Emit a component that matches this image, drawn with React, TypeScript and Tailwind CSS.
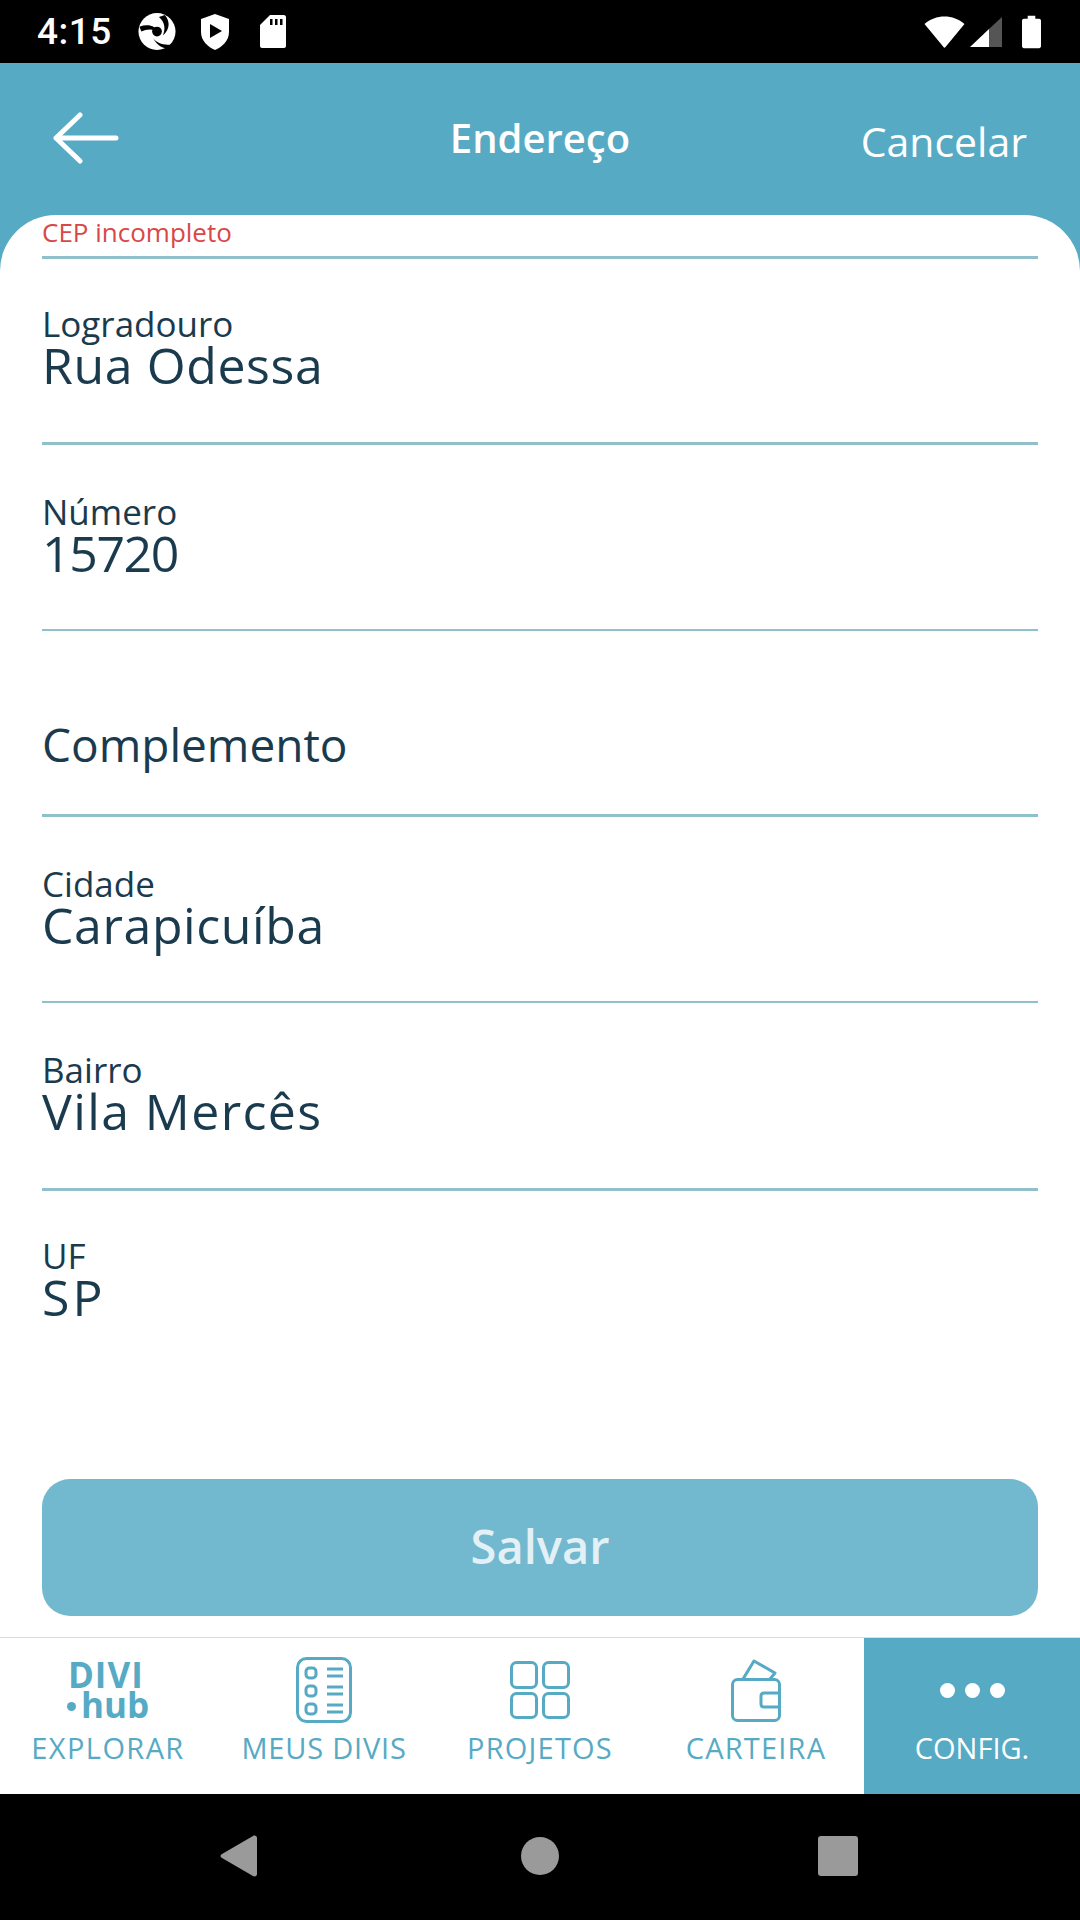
import type { ReactNode } from 'react';

function StatusBar() {
  return (
    <div className="h-[63px] shrink-0 bg-black flex items-center justify-between pl-[37px] pr-[39px] text-white">
      <div className="flex items-center">
        <span className="w-[73px] text-[37px] font-medium font-['Roboto',sans-serif] leading-none tracking-[0.5px]">4:15</span>
        <svg className="ml-[28px]" width="38" height="39" viewBox="0 0 38 40" fill="white">
          <circle cx="19" cy="20" r="19" />
          <path d="M1 15C10 12 18 14 21 22C17 17 9 17 3 20Z" fill="black" />
          <path d="M27 3C33 10 32 18 25 24C28 17 27 10 21 5Z" fill="black" />
          <path d="M15 27C19 32 27 35 35 33L37 36C28 40 20 36 15 27Z" fill="black" />
          <circle cx="19" cy="20" r="5" fill="black" />
        </svg>
        <svg className="ml-[24px]" width="30" height="36" viewBox="0 0 30 36" fill="white">
          <path d="M15 0L29 5V18C29 27 22 33 15 36C8 33 1 27 1 18V5Z" />
          <path d="M10 10L22 17L10 24Z" fill="black" />
        </svg>
        <svg className="ml-[30px]" width="26" height="33" viewBox="0 0 26 33" fill="white">
          <path d="M10 0H24C25 0 26 1 26 2V31C26 32 25 33 24 33H2C1 33 0 32 0 31V10Z" />
          <rect x="10" y="4" width="2.5" height="6" fill="black" />
          <rect x="15" y="4" width="2.5" height="6" fill="black" />
          <rect x="20" y="4" width="2.5" height="6" fill="black" />
        </svg>
      </div>
      <div className="flex items-center">
        <svg width="41" height="32" viewBox="0 0 40 32" fill="white">
          <path d="M0 8C11 -2 29 -2 40 8L21 31C20.500 32 19.500 32 19 31Z" />
        </svg>
        <svg className="ml-[5px]" width="32" height="31" viewBox="0 0 32 31">
          <path d="M0 31L19 13V31Z" fill="white" />
          <path d="M19 13L32 1V31H19Z" fill="#555" />
        </svg>
        <svg className="ml-[20px]" width="19" height="34" viewBox="0 0 20 34" fill="white">
          <path d="M6 0H14V3H18C19 3 20 4 20 5V32C20 33 19 34 18 34H2C1 34 0 33 0 32V5C0 4 1 3 2 3H6Z" />
        </svg>
      </div>
    </div>
  );
}

function Field({ label, value, className, valueClass }: { label: string; value: string; className: string; valueClass: string }) {
  return (
    <div className={`shrink-0 flex flex-col border-[#90c1ca] ${className}`}>
      <div className="pt-[48px] text-[35px] leading-[38px] text-[#1a3a4e]">{label}</div>
      <div className={`-mt-[4px] text-[50px] font-medium leading-[52px] text-[#1a3a4e] ${valueClass}`}>{value}</div>
    </div>
  );
}

function NavItem({ label, children, active, labelClass }: { label: string; children: ReactNode; active?: boolean; labelClass: string }) {
  return (
    <div className={`w-[216px] flex flex-col items-center ${active ? 'bg-[#56aac4] text-white' : 'text-[#56aac4]'}`}>
      <div className="h-[92px] pt-[12px] flex items-center justify-center">{children}</div>
      <div className={`text-[29px] leading-[36px] ${labelClass}`}>{label}</div>
    </div>
  );
}

function NavBar() {
  return (
    <div className="h-[157px] shrink-0 flex bg-white border-t border-[#d5dfe0]">
      <NavItem label="EXPLORAR" labelClass="tracking-[1.4px]">
        <div className="flex flex-col font-bold">
          <span className="text-[35px] leading-[29px] tracking-[1px] pl-[1px]">DIVI</span>
          <div className="flex items-center">
            <span className="w-[9px] h-[9px] rounded-full bg-[#56aac4] mr-[5px] mt-[4px]" />
            <span className="text-[35px] leading-[31px]">hub</span>
          </div>
        </div>
      </NavItem>
      <NavItem label="MEUS DIVIS" labelClass="tracking-[0.8px]">
        <svg width="56" height="66" viewBox="0 0 56 66" fill="none" stroke="currentColor" strokeWidth="3">
          <rect x="1.500" y="1.500" width="53" height="63" rx="9" />
          <rect x="10" y="11" width="10" height="10" rx="3.500" />
          <rect x="10" y="29" width="10" height="10" rx="3.500" />
          <rect x="10" y="47" width="10" height="10" rx="3.500" />
          <path d="M31 12H47M31 19H47M31 30H47M31 37H47M31 48H47M31 55H47" />
        </svg>
      </NavItem>
      <NavItem label="PROJETOS" labelClass="tracking-[1.2px]">
        <svg width="60" height="58" viewBox="0 0 60 58" fill="none" stroke="currentColor" strokeWidth="3">
          <rect x="1.500" y="1.500" width="25" height="25" rx="5" />
          <rect x="33.500" y="1.500" width="25" height="25" rx="5" />
          <rect x="1.500" y="32.500" width="25" height="24" rx="5" />
          <rect x="33.500" y="32.500" width="25" height="24" rx="5" />
        </svg>
      </NavItem>
      <NavItem label="CARTEIRA" labelClass="tracking-[1.2px]">
        <svg width="50" height="63" viewBox="0 0 50 63" fill="none" stroke="currentColor" strokeWidth="3" strokeLinejoin="round">
          <rect x="1.500" y="20.500" width="47" height="41" rx="5" />
          <path d="M12 20L23 2L44 14L39 20" />
          <path d="M48 34H33C31 34 30 35 30 37V45C30 47 31 48 33 48H48" />
        </svg>
      </NavItem>
      <NavItem label="CONFIG." labelClass="tracking-[0px]" active>
        <div className="flex gap-[10px]">
          <span className="w-[15px] h-[15px] rounded-full bg-white" />
          <span className="w-[15px] h-[15px] rounded-full bg-white" />
          <span className="w-[15px] h-[15px] rounded-full bg-white" />
        </div>
      </NavItem>
    </div>
  );
}

function SoftKeys() {
  return (
    <div className="h-[126px] shrink-0 bg-black flex items-center pl-[220px] pb-[2px]">
      <svg width="37" height="42" viewBox="0 0 37 42" fill="#9a9a9a">
        <path d="M2 19L33 1C35 0 37 1 37 3V39C37 41 35 42 33 41L2 23C0 22 0 20 2 19Z" />
      </svg>
      <div className="ml-[264px] w-[38px] h-[38px] rounded-full bg-[#9a9a9a]" />
      <div className="ml-[259px] w-[40px] h-[40px] rounded-[3px] bg-[#9a9a9a]" />
    </div>
  );
}

export default function App() {
  return (
    <div className="w-[1080px] h-[1920px] flex flex-col bg-white overflow-hidden font-['Open_Sans',sans-serif]">
      <StatusBar />
      <div className="bg-[#56aac4] h-[152px] shrink-0 flex items-center text-white pl-[53px] pr-[53px] pb-[2px]">
        <div className="flex-1">
          <svg width="66" height="52" viewBox="0 0 66 52" fill="none" stroke="white" strokeWidth="5" strokeLinecap="round" strokeLinejoin="round">
            <path d="M3 26H63M27 3L3 26L27 49" />
          </svg>
        </div>
        <span className="text-[40px] font-semibold">Endereço</span>
        <div className="flex-1 text-right text-[41px] mt-[8px]">Cancelar</div>
      </div>
      <div className="flex-1 bg-[#56aac4] flex flex-col">
        <div className="flex-1 bg-white rounded-t-[56px] flex flex-col px-[42px]">
          <div className="h-[44px] shrink-0 border-b-[3px] border-[#90c1ca] text-[26px] leading-[34px] text-[#d84848]">CEP incompleto</div>
          <Field label="Logradouro" value="Rua Odessa" className="h-[188px] -mt-[2px] border-b-[3px]" valueClass="tracking-[0.6px]" />
          <Field label="Número" value="15720" className="h-[186px] border-b-2" valueClass="tracking-[-1.4px]" />
          <div className="h-[186px] shrink-0 border-b-[3px] border-[#90c1ca] flex items-end pb-[44px] text-[46px] leading-[52px] text-[#1a3a4e]">Complemento</div>
          <Field label="Cidade" value="Carapicuíba" className="h-[186px] border-b-2" valueClass="tracking-[0.6px]" />
          <Field label="Bairro" value="Vila Mercês" className="h-[188px] border-b-[3px]" valueClass="tracking-[1.4px]" />
          <Field label="UF" value="SP" className="-mt-[2px]" valueClass="tracking-[3px]" />
          <div className="mt-auto mb-[21px] h-[137px] shrink-0 rounded-[28px] bg-[#72b9cf] flex items-center justify-center pb-[2px] text-[47px] font-semibold text-[#e3f1f6]">Salvar</div>
        </div>
      </div>
      <NavBar />
      <SoftKeys />
    </div>
  );
}
